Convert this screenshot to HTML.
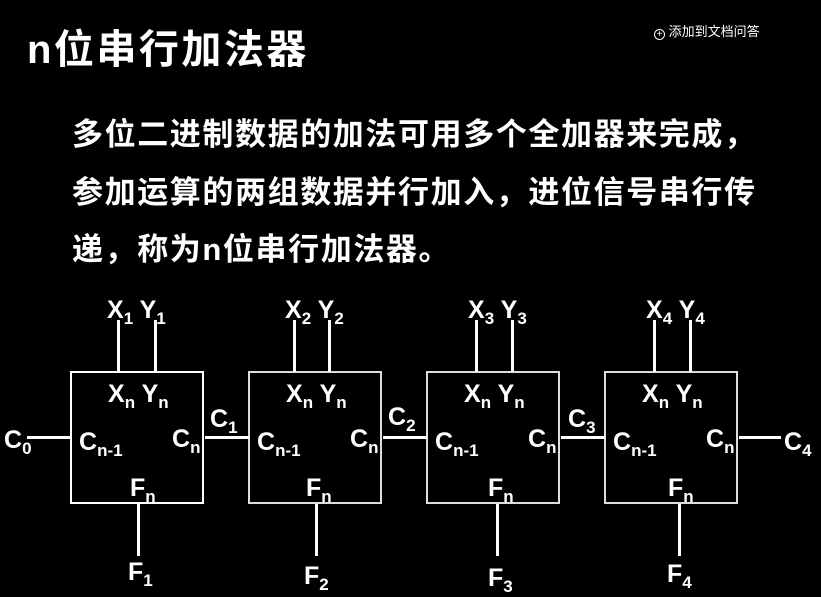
<!DOCTYPE html>
<html><head><meta charset="utf-8"><style>
body{margin:0;width:821px;height:597px;background:#000;overflow:hidden;position:relative;font-family:"Liberation Sans","Noto Sans CJK SC",sans-serif;color:#fff}
.t{position:absolute;font-weight:bold;white-space:nowrap}
.title{left:27px;top:26px;font-size:40px;letter-spacing:2.5px;line-height:48px}
.p{left:72px;font-size:31px;letter-spacing:1.6px;line-height:40px}
.box{position:absolute;width:130px;height:129px;border:2.5px solid #fff;top:371px}
.ln{position:absolute;background:#fff}
.l{position:absolute;font-weight:bold;font-size:25px;line-height:28px;white-space:nowrap}
.l sub{font-size:17px;vertical-align:-6px;line-height:0}
.doc{position:absolute;left:654px;top:21px;font-size:13px;color:#fff}
</style></head><body>
<div class="doc"><span style="display:inline-block;width:9px;height:9px;border:1px solid #fff;border-radius:50%;font-size:10px;line-height:9px;text-align:center;vertical-align:-1px">+</span> 添加到文档问答</div>
<div class="t title">n位串行加法器</div>
<div class="t p" style="top:115px">多位二进制数据的加法可用多个全加器来完成，</div>
<div class="t p" style="top:173px">参加运算的两组数据并行加入，进位信号串行传</div>
<div class="t p" style="top:230px">递，称为n位串行加法器。</div>

<div class="box" style="left:70px"></div>
<div class="box" style="left:248px;border-color:#ddd"></div>
<div class="box" style="left:426px;border-color:#ddd"></div>
<div class="box" style="left:604px;border-color:#ddd"></div>

<div class="ln" style="left:27px;top:436px;width:44px;height:3px"></div>
<div class="ln" style="left:205px;top:436px;width:44px;height:3px"></div>
<div class="ln" style="left:383px;top:436px;width:44px;height:3px"></div>
<div class="ln" style="left:561px;top:436px;width:44px;height:3px"></div>
<div class="ln" style="left:739px;top:436px;width:42px;height:3px"></div>

<div class="ln" style="left:117px;top:320px;width:3px;height:52px"></div>
<div class="ln" style="left:154px;top:320px;width:3px;height:52px"></div>
<div class="ln" style="left:137px;top:504px;width:3px;height:52px"></div>
<div class="ln" style="left:293px;top:320px;width:3px;height:52px"></div>
<div class="ln" style="left:328px;top:320px;width:3px;height:52px"></div>
<div class="ln" style="left:315px;top:504px;width:3px;height:52px"></div>
<div class="ln" style="left:475px;top:320px;width:3px;height:52px"></div>
<div class="ln" style="left:511px;top:320px;width:3px;height:52px"></div>
<div class="ln" style="left:496px;top:504px;width:3px;height:52px"></div>
<div class="ln" style="left:653px;top:320px;width:3px;height:52px"></div>
<div class="ln" style="left:689px;top:320px;width:3px;height:52px"></div>
<div class="ln" style="left:678px;top:504px;width:3px;height:52px"></div>

<div class="l" style="left:107px;top:296px">X<sub>1</sub> Y<sub>1</sub></div>
<div class="l" style="left:285px;top:296px">X<sub>2</sub> Y<sub>2</sub></div>
<div class="l" style="left:468px;top:296px">X<sub>3</sub> Y<sub>3</sub></div>
<div class="l" style="left:646px;top:296px">X<sub>4</sub> Y<sub>4</sub></div>

<div class="l" style="left:108px;top:380px">X<sub>n</sub> Y<sub>n</sub></div>
<div class="l" style="left:286px;top:380px">X<sub>n</sub> Y<sub>n</sub></div>
<div class="l" style="left:464px;top:380px">X<sub>n</sub> Y<sub>n</sub></div>
<div class="l" style="left:642px;top:380px">X<sub>n</sub> Y<sub>n</sub></div>

<div class="l" style="left:79px;top:428px">C<sub>n-1</sub></div>
<div class="l" style="left:257px;top:428px">C<sub>n-1</sub></div>
<div class="l" style="left:435px;top:428px">C<sub>n-1</sub></div>
<div class="l" style="left:613px;top:428px">C<sub>n-1</sub></div>
<div class="l" style="left:172px;top:425px">C<sub>n</sub></div>
<div class="l" style="left:350px;top:425px">C<sub>n</sub></div>
<div class="l" style="left:528px;top:425px">C<sub>n</sub></div>
<div class="l" style="left:706px;top:425px">C<sub>n</sub></div>

<div class="l" style="left:4px;top:426px">C<sub>0</sub></div>
<div class="l" style="left:210px;top:405px">C<sub>1</sub></div>
<div class="l" style="left:388px;top:403px">C<sub>2</sub></div>
<div class="l" style="left:568px;top:405px">C<sub>3</sub></div>
<div class="l" style="left:784px;top:428px">C<sub>4</sub></div>

<div class="l" style="left:130px;top:474px">F<sub>n</sub></div>
<div class="l" style="left:306px;top:474px">F<sub>n</sub></div>
<div class="l" style="left:488px;top:474px">F<sub>n</sub></div>
<div class="l" style="left:668px;top:474px">F<sub>n</sub></div>

<div class="l" style="left:128px;top:558px">F<sub>1</sub></div>
<div class="l" style="left:304px;top:562px">F<sub>2</sub></div>
<div class="l" style="left:488px;top:564px">F<sub>3</sub></div>
<div class="l" style="left:667px;top:560px">F<sub>4</sub></div>
</body></html>
